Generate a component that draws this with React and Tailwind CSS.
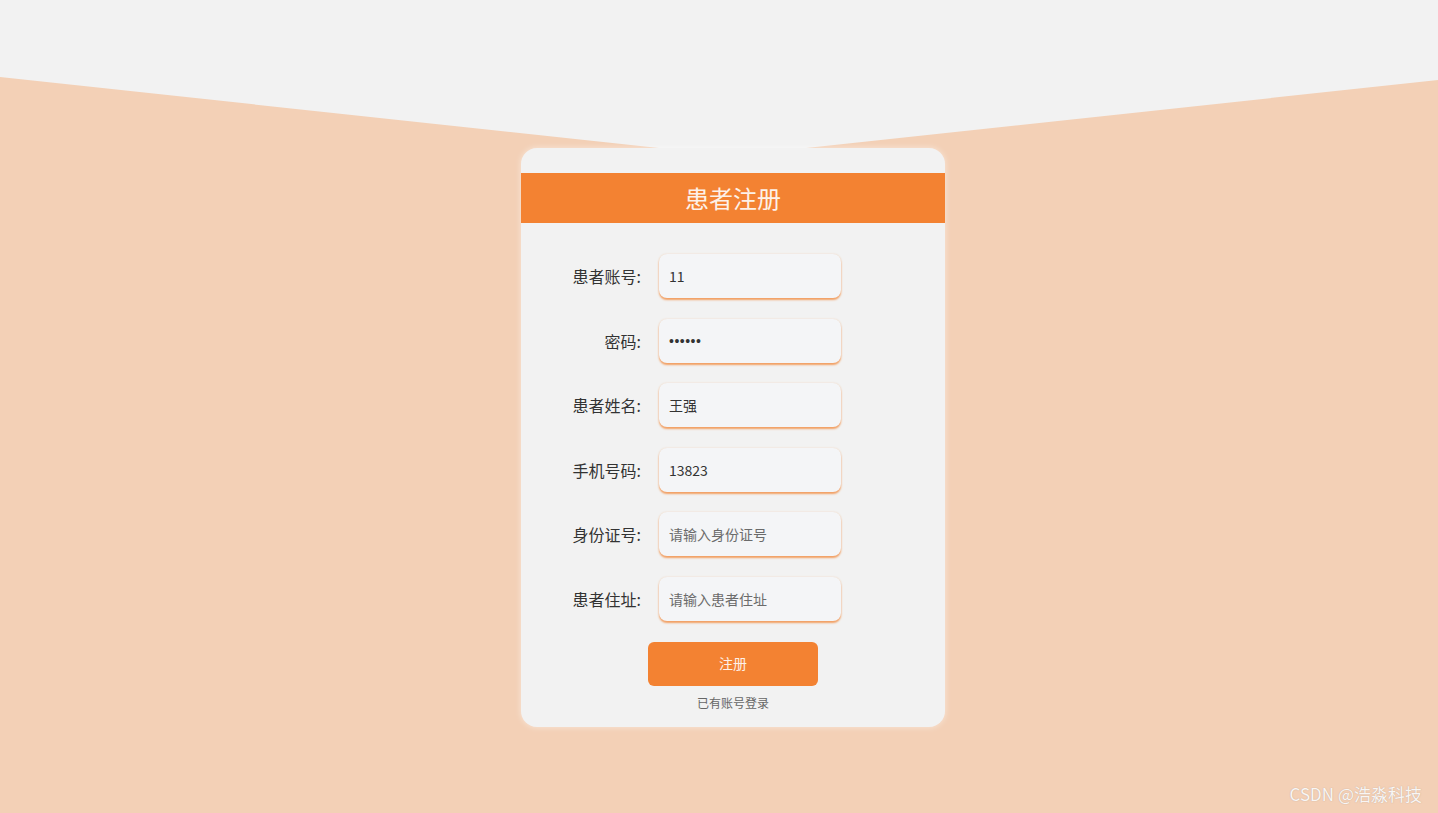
import React, { useState } from 'react'

const FIELDS = [
	{ label: '患者账号:', value: '11' },
	{ label: '密码:', value: '123456', type: 'password' },
	{ label: '患者姓名:', value: '王强' },
	{ label: '手机号码:', value: '13823' },
	{ label: '身份证号:', value: '', placeholder: '请输入身份证号' },
	{ label: '患者住址:', value: '', placeholder: '请输入患者住址' },
]

const App = () => {
	const [form, setForm] = useState(FIELDS.map(f => f.value))

	const update = (i, v) => {
		setForm(prev => prev.map((x, j) => (j === i ? v : x)))
	}

	return (
		<div
			className="relative w-full h-[813px] overflow-hidden bg-[#f3d0b6]"
			style={{ fontFamily: '"Noto Sans CJK SC", "Noto Sans", sans-serif' }}
		>
			{/* top wedge */}
			<svg
				className="absolute inset-0 w-full h-full"
				viewBox="0 0 1438 813"
				preserveAspectRatio="none"
			>
				<polygon points="0,0 1438,0 1438,80 733,156 0,77" fill="#f2f2f2" />
			</svg>

			<div className="relative flex justify-center pl-[28px] pt-[148px]">
				<div className="w-[424px] h-[579px] bg-[#f2f2f2] rounded-[16px] shadow-[0_0_6px_rgba(255,255,255,0.5)] pt-[25px]">
					<div className="h-[50px] bg-[#f38232] flex items-center justify-center">
						<h1 className="text-[24px] text-[#fdf1e8] leading-none">患者注册</h1>
					</div>

					<div className="flex flex-col gap-[20.6px] pt-[31px]">
						{FIELDS.map((f, i) => (
							<div key={f.label} className="flex items-center">
								<label className="w-[120px] text-right text-[16px] text-[#333]">
									{f.label}
								</label>
								<input
									type={f.type || 'text'}
									value={form[i]}
									placeholder={f.placeholder}
									onChange={e => update(i, e.target.value)}
									className={`ml-[18px] w-[182px] h-[44px] rounded-[8px] bg-[#f4f5f7] px-[10px] text-[14px] text-[#333] placeholder:text-[#6b6b6b] outline-none shadow-[0_2px_2px_#f2a064,0_0_2px_rgba(240,160,100,0.35)] ${
										f.type === 'password' ? 'font-["Liberation_Sans"] tracking-[0.5px]' : ''
									}`}
								/>
							</div>
						))}
					</div>

					<div className="flex flex-col items-center pt-[21px]">
						<button className="w-[170px] h-[44px] rounded-[6px] bg-[#f38232] text-[14px] text-[#fdf1e8]">
							注册
						</button>
						<a className="mt-[8px] text-[12px] text-[#666] cursor-pointer">已有账号登录</a>
					</div>
				</div>
			</div>

			<div className="absolute right-[16px] bottom-[7px] text-[17px] text-white/90 [text-shadow:0_0_1px_rgba(120,100,90,0.5)]">
				CSDN @浩淼科技
			</div>
		</div>
	)
}

export default App
